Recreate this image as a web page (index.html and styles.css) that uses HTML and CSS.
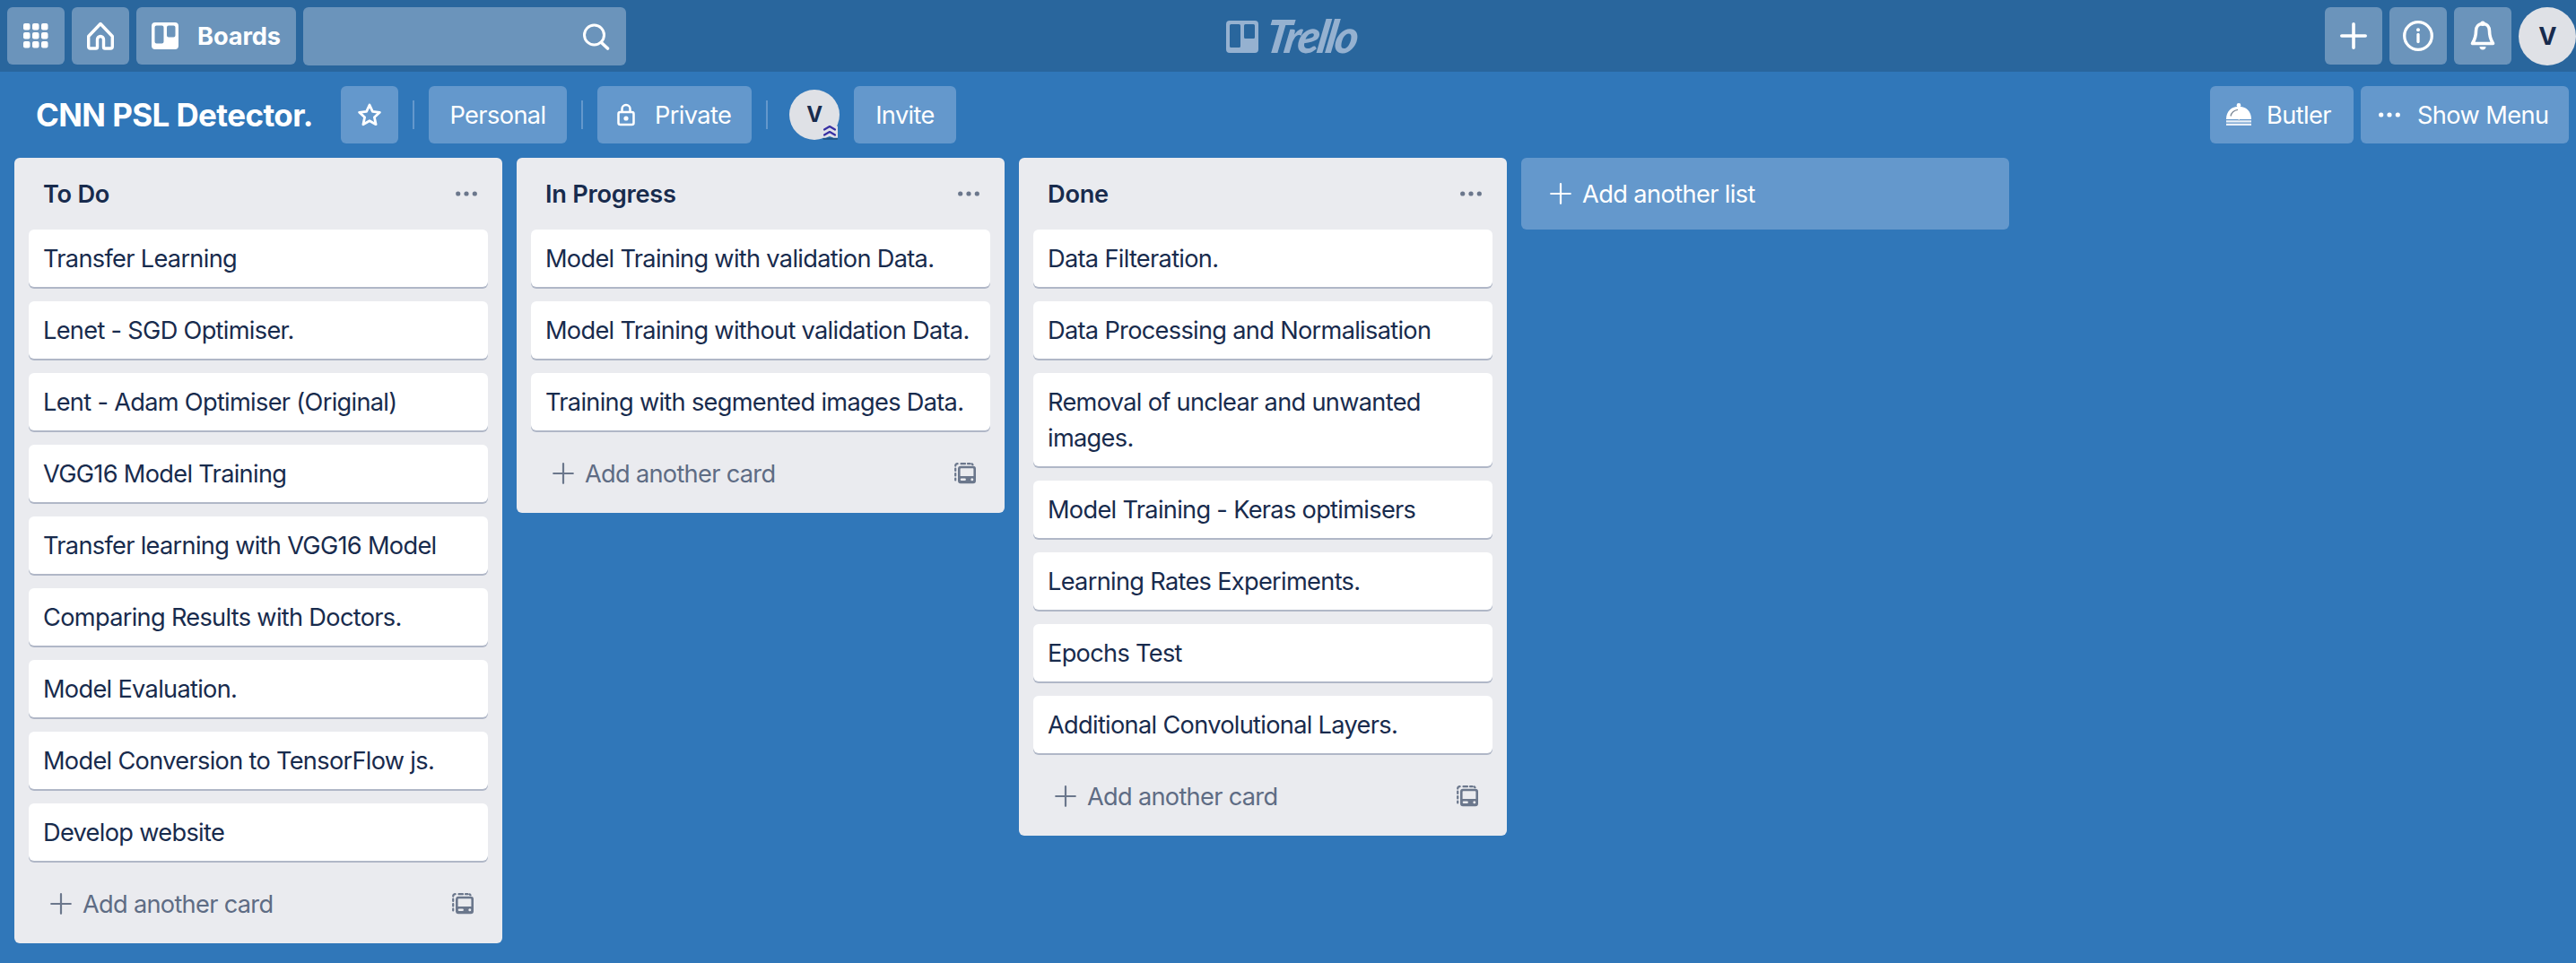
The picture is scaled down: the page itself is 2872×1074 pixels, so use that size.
FILE: index.html
```html
<!DOCTYPE html>
<html lang="en">
<head>
<meta charset="utf-8">
<title>CNN PSL Detector. | Trello</title>
<link rel="stylesheet" href="styles.css">
</head>
<body>
<svg class="defs" width="0" height="0" aria-hidden="true">
  <symbol id="plus" viewBox="0 0 24 24"><path d="M12 1.200v21.600M1.200 12h21.600" fill="none" stroke="currentColor" stroke-width="2.200" stroke-linecap="round"/></symbol>
  <symbol id="dots" viewBox="0 0 24 6"><g fill="currentColor"><circle cx="2.700" cy="3" r="2.600"/><circle cx="12" cy="3" r="2.600"/><circle cx="21.300" cy="3" r="2.600"/></g></symbol>
  <symbol id="template" viewBox="0 0 24 24"><path d="M1.200 19.500v-2M1.200 14.500v-2.500M1.200 9V6.500M1.200 3.600Q1.200 1.200 3.600 1.200M7.500 1.200h4.500M15 1.200h2.500M19.700 1.400l.8.800" fill="none" stroke="currentColor" stroke-width="2.200" stroke-linecap="round"/><path fill="currentColor" fill-rule="evenodd" d="M7 3.800h14a3 3 0 0 1 3 3v13.400a3 3 0 0 1-3 3H7a3 3 0 0 1-3-3V6.800a3 3 0 0 1 3-3zm.4 2.500a.8.8 0 0 0-.8.8v7.900h14.800V7.100a.8.8 0 0 0-.8-.8zM8 17.400a1.300 1.300 0 0 0 0 2.600h3.600a1.300 1.300 0 0 0 0-2.600zM19.800 17.200a1.500 1.500 0 1 0 0 3 1.500 1.500 0 0 0 0-3z"/></symbol>
</svg>

<header class="topbar">
  <nav class="topbar-left">
    <button class="hbtn" aria-label="Apps">
      <svg width="28" height="28" viewBox="0 0 28 28" fill="#fff"><rect width="7.500" height="7.500" rx="2"/><rect x="10" width="7.500" height="7.500" rx="2"/><rect x="20" width="7.500" height="7.500" rx="2"/><rect y="10" width="7.500" height="7.500" rx="2"/><rect x="10" y="10" width="7.500" height="7.500" rx="2"/><rect x="20" y="10" width="7.500" height="7.500" rx="2"/><rect y="20" width="7.500" height="7.500" rx="2"/><rect x="10" y="20" width="7.500" height="7.500" rx="2"/><rect x="20" y="20" width="7.500" height="7.500" rx="2"/></svg>
    </button>
    <button class="hbtn" aria-label="Home">
      <svg width="32" height="32" viewBox="0 0 32 32" fill="none" stroke="#fff" stroke-width="3.400" stroke-linejoin="round"><path d="M16 2.500 2.700 16.500V28q0 2 2 2h6.300q1.500 0 1.500-1.500V20a3.500 3.500 0 0 1 7 0v8.500q0 1.500 1.500 1.500h6.300q2 0 2-2V16.500z"/></svg>
    </button>
    <button class="hbtn hbtn-boards">
      <svg width="30" height="30" viewBox="0 0 30 30"><path fill="#fff" fill-rule="evenodd" d="M4 0h22a4 4 0 0 1 4 4v22a4 4 0 0 1-4 4H4a4 4 0 0 1-4-4V4a4 4 0 0 1 4-4zm1.500 3.500a2 2 0 0 0-2 2V21.500a2 2 0 0 0 2 2h6a2 2 0 0 0 2-2v-16a2 2 0 0 0-2-2zm13.500 0a2 2 0 0 0-2 2v9a2 2 0 0 0 2 2h5.500a2 2 0 0 0 2-2v-9a2 2 0 0 0-2-2z"/></svg>
      <span class="boards-label">Boards</span>
    </button>
    <div class="search">
      <svg width="30" height="30" viewBox="0 0 30 30" fill="none" stroke="#fff" stroke-width="3" stroke-linecap="round"><circle cx="12.500" cy="13" r="11"/><path d="m20.500 21.500 7 6.500" stroke-width="3.600"/></svg>
    </div>
  </nav>
  <a class="logo">
    <svg width="36" height="36" viewBox="0 0 36 36"><path fill="currentColor" fill-rule="evenodd" d="M4 0h28a4 4 0 0 1 4 4v28a4 4 0 0 1-4 4H4a4 4 0 0 1-4-4V4a4 4 0 0 1 4-4zm1.500 4A1.500 1.500 0 0 0 4 5.500v23A1.500 1.500 0 0 0 5.500 30h9a1.500 1.500 0 0 0 1.500-1.500v-23A1.500 1.500 0 0 0 14.500 4zm16 0A1.500 1.500 0 0 0 20 5.500v13a1.500 1.500 0 0 0 1.500 1.500h9a1.500 1.500 0 0 0 1.500-1.500v-13A1.500 1.500 0 0 0 30.500 4z"/></svg>
    <span class="logo-word">Trello</span>
  </a>
  <div class="topbar-right">
    <button class="hbtn" aria-label="Create"><svg width="30" height="30" viewBox="0 0 30 30" fill="none" stroke="#fff" stroke-width="3.600" stroke-linecap="round"><path d="M15 1.800v26.400M1.800 15h26.400"/></svg></button>
    <button class="hbtn" aria-label="Information"><svg width="34" height="34" viewBox="0 0 34 34" fill="none" stroke="#fff" stroke-width="3.300" stroke-linecap="round"><circle cx="17" cy="17" r="15.300"/><path d="M17 15.500v8"/><circle cx="17" cy="10.300" r="2" fill="#fff" stroke="none"/></svg></button>
    <button class="hbtn" aria-label="Notifications"><svg width="28" height="34" viewBox="0 0 28 34"><path fill="none" stroke="#fff" stroke-width="3.600" stroke-linejoin="round" d="M14 3.500c-5 0-7.500 3.500-7.500 8 0 6-1.500 10-4 14h23c-2.500-4-4-8-4-14 0-4.500-2.500-8-7.500-8z"/><circle cx="14" cy="3.200" r="2.700" fill="#fff"/><path fill="#fff" d="M10.500 29h7a3.500 3.500 0 0 1-7 0z"/></svg></button>
    <span class="avatar">V</span>
  </div>
</header>

<div class="boardbar">
  <h1 class="board-title">CNN PSL Detector.</h1>
  <button class="bbtn bbtn-star" aria-label="Star"><svg width="28" height="28" viewBox="0 0 28 28" fill="none" stroke="#fff" stroke-width="2.800" stroke-linejoin="round"><path d="m14 3 3.400 7.400 8 .9-6 5.400 1.700 8-7.100-4-7.100 4 1.700-8-6-5.400 8-.9z"/></svg></button>
  <i class="divider"></i>
  <button class="bbtn w-personal"><span>Personal</span></button>
  <i class="divider"></i>
  <button class="bbtn w-private"><svg width="20" height="26" viewBox="0 0 20 26" fill="none" stroke="#fff" stroke-width="2.500"><rect x="1.500" y="10" width="17" height="14" rx="2"/><path d="M5.500 10V6.500a4.500 4.500 0 0 1 9 0V10"/><circle cx="10" cy="17" r="2.600" fill="#fff" stroke="none"/></svg><span>Private</span></button>
  <i class="divider"></i>
  <span class="member">V
    <svg class="member-badge" width="18" height="18" viewBox="0 0 18 18"><path fill="#1f5584" d="M1 15.500h17V17q0 .7-1 .7H2z"/><path fill="#e0e1e7" d="M3 0h12l3 3v12.800h-4.500L9 14l-4.500 1.800H0V5z"/><path d="M3 6.500 9 3l6 3.500M3 12.500 9 9l6 3.500" fill="none" stroke="#3830a3" stroke-width="2.200" stroke-linecap="round" stroke-linejoin="round"/></svg>
  </span>
  <button class="bbtn w-invite"><span>Invite</span></button>
  <button class="bbtn w-butler"><svg width="28" height="26" viewBox="0 0 28 26"><circle cx="14" cy="2.300" r="2.300" fill="#fff"/><path fill="#fff" d="M0 18C0 9 6 3.800 14 3.800S28 9 28 18z"/><path d="M5 14.500c.7-3.500 3.500-6.500 8-7.200" fill="none" stroke="#7f8b99" stroke-width="1.300"/><path fill="#e9f0f8" d="M0 19.300h28v2.200H0zM0 22.800h28V25H0z"/><path fill="#b9c9da" d="M13.500 18h1.500v2h-1.500z"/></svg><span>Butler</span></button>
  <button class="bbtn w-menu"><svg width="24" height="6"><use href="#dots"/></svg><span>Show Menu</span></button>
</div>

<main class="board">
  <section class="list">
    <h2 class="list-head"><span>To Do</span><svg width="24" height="6"><use href="#dots"/></svg></h2>
    <div class="cards">
      <div class="card">Transfer Learning</div>
      <div class="card">Lenet - SGD Optimiser.</div>
      <div class="card">Lent - Adam Optimiser (Original)</div>
      <div class="card">VGG16 Model Training</div>
      <div class="card">Transfer learning with VGG16 Model</div>
      <div class="card">Comparing Results with Doctors.</div>
      <div class="card">Model Evaluation.</div>
      <div class="card">Model Conversion to TensorFlow js.</div>
      <div class="card">Develop website</div>
    </div>
    <div class="list-foot"><svg width="24" height="24"><use href="#plus"/></svg><span>Add another card</span><svg class="tpl" width="24" height="24"><use href="#template"/></svg></div>
  </section>
  <section class="list">
    <h2 class="list-head"><span>In Progress</span><svg width="24" height="6"><use href="#dots"/></svg></h2>
    <div class="cards">
      <div class="card">Model Training with validation Data.</div>
      <div class="card">Model Training without validation Data.</div>
      <div class="card">Training with segmented images Data.</div>
    </div>
    <div class="list-foot"><svg width="24" height="24"><use href="#plus"/></svg><span>Add another card</span><svg class="tpl" width="24" height="24"><use href="#template"/></svg></div>
  </section>
  <section class="list">
    <h2 class="list-head"><span>Done</span><svg width="24" height="6"><use href="#dots"/></svg></h2>
    <div class="cards">
      <div class="card">Data Filteration.</div>
      <div class="card">Data Processing and Normalisation</div>
      <div class="card">Removal of unclear and unwanted images.</div>
      <div class="card">Model Training - Keras optimisers</div>
      <div class="card">Learning Rates Experiments.</div>
      <div class="card">Epochs Test</div>
      <div class="card">Additional Convolutional Layers.</div>
    </div>
    <div class="list-foot"><svg width="24" height="24"><use href="#plus"/></svg><span>Add another card</span><svg class="tpl" width="24" height="24"><use href="#template"/></svg></div>
  </section>
  <button class="add-list"><svg width="24" height="24"><use href="#plus"/></svg><span>Add another list</span></button>
</main>
</body>
</html>
```
FILE: styles.css
```css
* { box-sizing: border-box; }
body {
  margin: 0;
  height: 1074px;
  overflow: hidden;
  background: #3077b9;
  color: #182b4d;
  font: 400 27.2px/40px Inter, "Liberation Sans", sans-serif;
  letter-spacing: -0.6px;
}
button { border: 0; padding: 0; font: inherit; letter-spacing: inherit; color: #fff; }
svg { display: block; flex: none; }
.defs { position: absolute; }

.topbar {
  display: grid;
  grid-template-columns: 1fr auto 1fr;
  height: 80px;
  padding: 8px 0 8px 8px;
  background: #29669d;
}
.topbar-left, .topbar-right { display: flex; gap: 8px; }
.topbar-right { justify-content: flex-end; }
.hbtn {
  display: flex;
  align-items: center;
  justify-content: center;
  width: 64px;
  height: 64px;
  border-radius: 6px;
  background: #6b94bb;
}
.hbtn-boards { width: 178px; justify-content: flex-start; gap: 21px; padding-left: 17px; }
.boards-label { padding-top: 1px; font-weight: 700; letter-spacing: -0.1px; }
.search {
  display: flex;
  align-items: center;
  justify-content: flex-end;
  width: 360px;
  padding-right: 18px;
  border-radius: 6px;
  background: #6b94bb;
}
.logo { display: flex; align-items: center; gap: 9px; width: 147px; color: #95b1d0; }
.logo-word {
  font: italic 900 51px/56px Lato, sans-serif;
  letter-spacing: -2.5px;
  transform: translateY(-1px) scaleX(0.97) skewX(-10deg);
  transform-origin: left center;
}
.avatar {
  width: 64px;
  border-radius: 50%;
  background: #dfe1e6;
  color: #182b4d;
  font-weight: 700;
  line-height: 65px;
  text-align: center;
}

.boardbar { display: flex; align-items: center; height: 96px; padding: 0 8px 0 40px; }
.board-title { width: 340px; margin: 0; font-size: 35px; font-weight: 700; line-height: 64px; letter-spacing: -0.6px; white-space: nowrap; color: #fff; }
.bbtn {
  display: flex;
  align-items: center;
  justify-content: center;
  height: 64px;
  border-radius: 6px;
  background: #6498cc;
  white-space: nowrap;
}
.bbtn span, .add-list span, .list-head span, .list-foot span { padding-top: 2px; }
.bbtn-star { width: 64px; }
.divider { width: 2px; height: 32px; margin: 0 16px; background: #6498cc; }
.w-personal { width: 154px; }
.w-private { width: 172px; justify-content: flex-start; gap: 22px; padding-left: 22px; }
.w-invite { width: 114px; margin-left: 16px; }
.w-butler { width: 160px; margin-left: auto; margin-right: 8px; justify-content: flex-start; gap: 17px; padding-left: 18px; }
.w-menu { width: 232px; justify-content: flex-start; gap: 19px; padding-left: 20px; }
.member {
  position: relative;
  width: 56px;
  height: 56px;
  margin-left: 8px;
  border-radius: 50%;
  background: #dfe1e6;
  font-size: 24px;
  font-weight: 700;
  line-height: 56px;
  text-align: center;
}
.member-badge { position: absolute; right: 2px; bottom: 0; }

.board { display: flex; align-items: flex-start; gap: 16px; padding-left: 16px; }
.list { width: 544px; padding: 0 16px; border-radius: 6px; background: #eaebef; }
.list-head {
  display: flex;
  align-items: center;
  justify-content: space-between;
  height: 80px;
  margin: 0;
  padding: 0 12px 0 16px;
  font-size: 27.2px;
  font-weight: 600;
  letter-spacing: -0.25px;
}
.list-head svg, .list-foot svg { color: #6b778c; }
.cards { display: flex; flex-direction: column; gap: 16px; }
.card {
  padding: 13px 16px 11px;
  border-radius: 6px;
  background: #fff;
  box-shadow: 0 2px 0 #b0b7c7;
  letter-spacing: -0.69px;
}
.list-foot {
  display: flex;
  align-items: center;
  gap: 12px;
  height: 92px;
  padding: 4px 16px 0 24px;
  color: #5e6c84;
  letter-spacing: -0.7px;
}
.tpl { margin-left: auto; }
.add-list {
  display: flex;
  align-items: center;
  gap: 12px;
  width: 544px;
  height: 80px;
  padding-left: 32px;
  border-radius: 6px;
  background: #6498cc;
}
```
